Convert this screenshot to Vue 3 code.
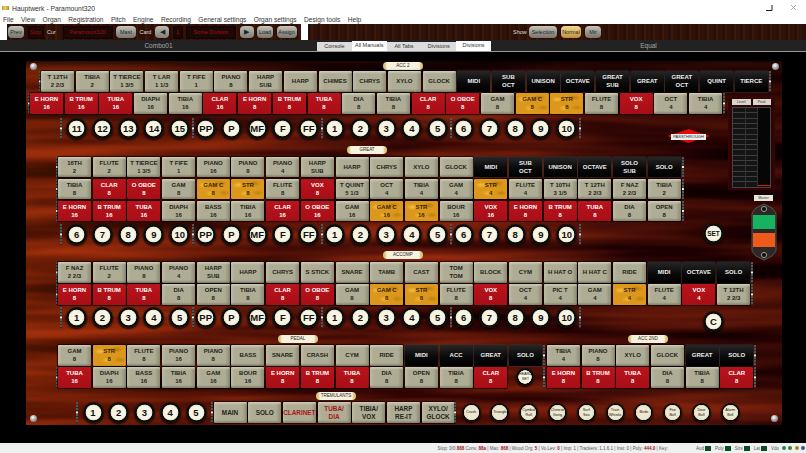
<script setup>
const parse = (list) =>
  list.split(',').map((s) => {
    const [kind, ...lines] = s.trim().split('|')
    return { kind, lines }
  })

const a1 = parse('b|T 12TH|2 2/3,b|TIBIA|2,b|T TIERCE|1 3/5,b|T LAR|1 1/3,b|T FIFE|1,b|PIANO|8,b|HARP|SUB,b|HARP,b|CHIMES,b|CHRYS,b|XYLO,b|GLOCK,d|MIDI,d|SUB|OCT,d|UNISON,d|OCTAVE,d|GREAT|SUB,d|GREAT,d|GREAT|OCT,d|QUINT,d|TIERCE')
const a2 = parse('r|E HORN|16,r|B TRUM|16,r|TUBA|16,b|DIAPH|16,b|TIBIA|16,r|CLAR|16,r|E HORN|8,r|B TRUM|8,r|TUBA|8,b|DIA|8,b|TIBIA|8,r|CLAR|8,r|O OBOE|8,b|GAM|8,g|GAM C|8,g|STR|8,b|FLUTE|8,r|VOX|8,b|OCT|4,b|TIBIA|4')
const g1 = parse('b|16TH|2,b|FLUTE|2,b|T TIERCE|1 3/5,b|T FIFE|1,b|PIANO|16,b|PIANO|8,b|PIANO|4,b|HARP|SUB,b|HARP,b|CHRYS,b|XYLO,b|GLOCK,d|MIDI,d|SUB|OCT,d|UNISON,d|OCTAVE,d|SOLO|SUB,d|SOLO')
const g2 = parse('b|TIBIA|8,r|CLAR|8,r|O OBOE|8,b|GAM|8,g|GAM C|8,g|STR|8,b|FLUTE|8,r|VOX|8,b|T QUINT|5 1/3,b|OCT|4,b|TIBIA|4,b|GAM|4,g|STR|4,b|FLUTE|4,b|T 10TH|3 1/5,b|T 12TH|2 2/3,b|F NAZ|2 2/3,b|TIBIA|2')
const g3 = parse('r|E HORN|16,r|B TRUM|16,r|TUBA|16,b|DIAPH|16,b|BASS|16,b|TIBIA|16,r|CLAR|16,r|O OBOE|16,b|GAM|16,g|GAM C|16,g|STR|16,b|BOUR|16,r|VOX|16,r|E HORN|8,r|B TRUM|8,r|TUBA|8,b|DIA|8,b|OPEN|8')
const c1 = parse('b|F NAZ|2 2/3,b|FLUTE|2,b|PIANO|8,b|PIANO|4,b|HARP|SUB,b|HARP,b|CHRYS,b|S STICK,b|SNARE,b|TAMB,b|CAST,b|TOM|TOM,b|BLOCK,b|CYM,b|H HAT O,b|H HAT C,b|RIDE,d|MIDI,d|OCTAVE,d|SOLO')
const c2 = parse('r|E HORN|8,r|B TRUM|8,r|TUBA|8,b|DIA|8,b|OPEN|8,b|TIBIA|8,r|CLAR|8,r|O OBOE|8,b|GAM|8,g|GAM C|8,g|STR|8,b|FLUTE|8,r|VOX|8,b|OCT|4,b|PIC T|4,b|GAM|4,g|STR|4,b|FLUTE|4,r|VOX|4,b|T 12TH|2 2/3')
const p1 = parse('b|GAM|8,g|STR|8,b|FLUTE|8,b|PIANO|16,b|PIANO|8,b|BASS,b|SNARE,b|CRASH,b|CYM,b|RIDE,d|MIDI,d|ACC,d|GREAT,d|SOLO')
const p2 = parse('r|TUBA|16,b|DIAPH|16,b|BASS|16,b|TIBIA|16,b|GAM|16,b|BOUR|16,r|E HORN|8,r|B TRUM|8,r|TUBA|8,b|DIA|8,b|OPEN|8,b|TIBIA|8,r|CLAR|8')
const s1 = parse('b|TIBIA|4,b|PIANO|8,b|XYLO,b|GLOCK,d|GREAT,d|SOLO')
const s2 = parse('r|E HORN|8,r|B TRUM|8,r|TUBA|8,b|DIA|8,b|TIBIA|8,r|CLAR|8')
const trem = parse('b|MAIN,b|SOLO,t|CLARINET,t|TUBA/|DIA,b|TIBIA/|VOX,b|HARP|RE-IT,b|XYLO/|GLOCK')

const pistons = (a) => a.split(' ')
const n1 = pistons('11 12 13 14 15')
const n2 = pistons('6 7 8 9 10')
const n3 = pistons('1 2 3 4 5')
const dyn = pistons('PP P MF F FF')

const fx = [['Crash'], ['Triangle'], ['Cymbal', 'Roll'], ['Chinese', 'Gong'], ['Surf', 'Sea'], ['Train', 'Whistle'], ['Birds'], ['Fire', 'Bell'], ['Door', 'Bell'], ['Alarm', 'Bell']]
const menu = ['File', 'View', 'Organ', 'Registration', 'Pitch', 'Engine', 'Recording', 'General settings', 'Organ settings', 'Design tools', 'Help']
const tabs = [['Console', ''], ['All Manuals', 'on'], ['All Tabs', ''], ['Divisions', ''], ['Divisions', 'on']]
const groups = [[n1, 'first'], [dyn, ''], [n3, ''], [n2, '']]
const groups2 = [[n2, 'first'], [dyn, ''], [n3, ''], [n2, '']]
const groups3 = [[n3, 'first'], [dyn, ''], [n3, ''], [n2, '']]
const rowsOfPistons = [groups, groups2, groups3]
</script>

<template>
  <div class="app">
    <header class="title">
      <span class="logo"></span>
      <span class="title-text">Hauptwerk - Paramount320</span>
      <svg class="winbtns" width="36" height="10" viewBox="0 0 36 10">
        <path d="M2 7.5H8V2" fill="none" stroke="#222" stroke-width="1" />
        <path d="M27 2l5 5M32 2l-5 5" stroke="#aaa" stroke-width="1" />
      </svg>
    </header>
    <nav class="menu">
      <span v-for="m in menu" :key="m">{{ m }}</span>
    </nav>

    <div class="toolbar">
      <div class="tool-left">
        <span class="silver w16">Prev</span>
        <span class="lcd w16">Stop</span>
        <span class="tlabel w12">Cur</span>
        <span class="lcd w50">Paramount320</span>
        <span class="silver w20">Mast</span>
        <span class="tlabel w12">Card</span>
        <span class="silver arrow">&#9664;</span>
        <span class="lcd w10">1</span>
        <span class="lcd w50">Some Division</span>
        <span class="silver arrow">&#9654;</span>
        <span class="silver w16">Load</span>
        <span class="silver w20">Assign</span>
      </div>
      <div class="tool-right">
        <span class="tlabel w12">Show</span>
        <span class="silver w28">Selection</span>
        <span class="gold w20">Normal</span>
        <span class="silver w16">Mir</span>
      </div>
    </div>

    <div class="tabbar">
      <span class="zone">Combo01</span>
      <div class="tabs">
        <span v-for="(t, i) in tabs" :key="i" class="tab" :class="t[1]">{{ t[0] }}</span>
      </div>
      <span class="zone">Equal</span>
    </div>

    <main class="stage">
      <section class="panel">
        <svg class="wood" width="756" height="364">
          <defs>
            <filter id="grain" x="0" y="0" width="100%" height="100%" color-interpolation-filters="sRGB">
              <feTurbulence type="fractalNoise" baseFrequency="0.0035 0.05" numOctaves="3" seed="11" />
              <feColorMatrix values="0.95 0 0 0 -0.14  0.34 0 0 0 -0.1  0.1 0 0 0 -0.02  0 0 0 0 1" />
            </filter>
            <linearGradient id="shade" x1="0" x2="1" y1="0" y2="0">
              <stop offset="0" stop-color="#c84400" stop-opacity=".28" />
              <stop offset=".4" stop-color="#8a2000" stop-opacity=".08" />
              <stop offset=".7" stop-color="#200000" stop-opacity=".18" />
              <stop offset="1" stop-color="#180000" stop-opacity=".42" />
            </linearGradient>
            <linearGradient id="topfade" x1="0" x2="0" y1="0" y2="1">
              <stop offset="0" stop-color="#000" stop-opacity=".7" />
              <stop offset=".03" stop-color="#000" stop-opacity=".1" />
              <stop offset="1" stop-color="#000" stop-opacity="0" />
            </linearGradient>
          </defs>
          <rect width="756" height="364" filter="url(#grain)" />
          <rect width="756" height="364" fill="url(#shade)" />
          <rect width="756" height="364" fill="url(#topfade)" />
        </svg>

        <div class="content">
          <div class="pills pills-a"><span class="pill">ACC 2</span></div>
          <div class="row in-a1">
            <i class="strip"></i>
            <button v-for="(b, i) in a1" :key="i" class="key" :class="b.kind"><span v-for="l in b.lines" :key="l">{{ l }}</span></button>
            <i class="strip end"></i>
          </div>
          <div class="row in-a2 mt15">
            <i class="strip"></i>
            <button v-for="(b, i) in a2" :key="i" class="key" :class="b.kind"><span v-for="l in b.lines" :key="l">{{ l }}</span></button>
            <i class="strip end"></i>
          </div>

          <div class="pistons m-a">
            <template v-for="(g, gi) in rowsOfPistons[0]" :key="gi">
              <i class="strip tall"></i>
              <div class="pgroup" :class="g[1]"><span v-for="n in g[0]" :key="n" class="piston">{{ n }}</span></div>
            </template>
            <i class="strip tall"></i>
          </div>

          <div class="pills pills-g"><span class="pill">GREAT</span></div>
          <div class="row in-g">
            <i class="strip"></i>
            <button v-for="(b, i) in g1" :key="i" class="key" :class="b.kind"><span v-for="l in b.lines" :key="l">{{ l }}</span></button>
            <i class="strip end"></i>
          </div>
          <div class="row in-g mt15">
            <i class="strip"></i>
            <button v-for="(b, i) in g2" :key="i" class="key" :class="b.kind"><span v-for="l in b.lines" :key="l">{{ l }}</span></button>
            <i class="strip end"></i>
          </div>
          <div class="row in-g mt15">
            <i class="strip"></i>
            <button v-for="(b, i) in g3" :key="i" class="key" :class="b.kind"><span v-for="l in b.lines" :key="l">{{ l }}</span></button>
            <i class="strip end"></i>
          </div>

          <div class="pistons m-g">
            <template v-for="(g, gi) in rowsOfPistons[1]" :key="gi">
              <i class="strip tall"></i>
              <div class="pgroup" :class="g[1]"><span v-for="n in g[0]" :key="n" class="piston">{{ n }}</span></div>
            </template>
            <i class="strip tall"></i>
          </div>

          <div class="pills pills-c"><span class="pill">ACCOMP</span></div>
          <div class="row in-g">
            <i class="strip"></i>
            <button v-for="(b, i) in c1" :key="i" class="key" :class="b.kind"><span v-for="l in b.lines" :key="l">{{ l }}</span></button>
            <i class="strip end"></i>
          </div>
          <div class="row in-g mt15">
            <i class="strip"></i>
            <button v-for="(b, i) in c2" :key="i" class="key" :class="b.kind"><span v-for="l in b.lines" :key="l">{{ l }}</span></button>
            <i class="strip end"></i>
          </div>

          <div class="pistons m-c">
            <template v-for="(g, gi) in rowsOfPistons[2]" :key="gi">
              <i class="strip tall"></i>
              <div class="pgroup" :class="g[1]"><span v-for="n in g[0]" :key="n" class="piston">{{ n }}</span></div>
            </template>
            <i class="strip tall"></i>
          </div>

          <div class="pills pills-p"><span class="pill">PEDAL</span><span class="pill second">ACC 2ND</span></div>
          <div class="row in-g">
            <i class="strip blank"></i>
            <button v-for="(b, i) in p1" :key="i" class="key" :class="b.kind"><span v-for="l in b.lines" :key="l">{{ l }}</span></button>
            <i class="strip mid"></i>
            <button v-for="(b, i) in s1" :key="i" class="key" :class="b.kind"><span v-for="l in b.lines" :key="l">{{ l }}</span></button>
            <i class="strip end"></i>
          </div>
          <div class="row in-g mt15">
            <i class="strip"></i>
            <button v-for="(b, i) in p2" :key="i" class="key" :class="b.kind"><span v-for="l in b.lines" :key="l">{{ l }}</span></button>
            <div class="slot"><span class="piston mini"><em>HEARD</em><em>SET</em></span></div>
            <i class="strip mid"></i>
            <button v-for="(b, i) in s2" :key="i" class="key" :class="b.kind"><span v-for="l in b.lines" :key="l">{{ l }}</span></button>
            <i class="strip end"></i>
          </div>

          <div class="pills pills-t"><span class="pill">TREMULANTS</span></div>
          <div class="trem">
            <i class="strip tall"></i>
            <div class="pgroup tremgroup"><span v-for="n in n3" :key="n" class="piston">{{ n }}</span></div>
            <i class="strip tall"></i>
            <div class="row tremkeys">
              <button v-for="(b, i) in trem" :key="i" class="key" :class="b.kind"><span v-for="l in b.lines" :key="l">{{ l }}</span></button>
            </div>
            <i class="strip tall"></i>
            <div class="fxgroup">
              <span v-for="(f, i) in fx" :key="i" class="piston fx"><em v-for="l in f" :key="l">{{ l }}</em></span>
            </div>
          </div>
        </div>

        <span class="bolt tl"></span><span class="bolt tr"></span><span class="bolt bl"></span><span class="bolt br"></span>

        <div class="alert"><span>PASSTHROUGH</span></div>

        <div class="meter">
          <div class="chips"><span>Level</span><span>Peak</span></div>
          <div class="bars"><i></i><i></i><i class="peak"></i></div>
        </div>

        <span class="piston free set">SET</span>
        <span class="piston free cancel">C</span>

        <div class="expr-label">Master</div>
        <svg class="expr" width="26" height="58" viewBox="0 0 26 58">
          <path d="M5 5 L13 1 L21 5 L25 10 V48 L21 53 L13 57 L5 53 L1 48 V10 Z" fill="#2c2826" stroke="#555" />
          <circle cx="13" cy="6" r="2.6" fill="#111" stroke="#999" stroke-width="1" />
          <circle cx="13" cy="52" r="2.6" fill="#111" stroke="#999" stroke-width="1" />
          <rect x="2" y="12" width="22" height="14" fill="#17b25f" />
          <rect x="2" y="30" width="22" height="14" fill="#ee5a1a" />
        </svg>
      </section>
    </main>

    <footer class="status">
      <span class="st">Stop: 0/0 <b>888</b> Cons: <b>88a</b> | Max: <b>868</b> | Wood Org: <b>5</b> | Vo.Lev: <b>0</b> | Imp: 1 | Trackers: 1.1.6.1 | Inst: 0 | Poly: <b>444.0</b> | Key:</span>
      <span class="leds">
        Aud <i class="sq"></i> Poly <i class="sq"></i> Strs <i class="sq"></i> Lat <i class="sq"></i> Vdo
        <i class="dot g"></i><i class="dot g"></i><i class="dot y"></i><i class="dot b"></i>
      </span>
    </footer>
  </div>
</template>

<style scoped>
.app {
  width: 806px;
  height: 453px;
  display: flex;
  flex-direction: column;
  overflow: hidden;
  background: #fff;
  font-family: "Liberation Sans", Arial, sans-serif;
}
.title {
  height: 16px;
  display: flex;
  align-items: center;
  padding-left: 2px;
  gap: 3px;
  font: 6.8px "Liberation Sans", Arial, sans-serif;
  color: #333;
}
.logo {
  width: 7px;
  height: 4px;
  background: linear-gradient(90deg, #c8a030, #e8d070, #b08820);
}
.winbtns { margin-left: auto; margin-right: 6px; }
.menu {
  height: 8px;
  display: flex;
  align-items: center;
  gap: 7.4px;
  padding-left: 3px;
  font: 6.6px/8px "Liberation Sans", Arial, sans-serif;
  color: #333;
  white-space: nowrap;
}
.toolbar {
  height: 16px;
  display: flex;
  padding-left: 7px;
  gap: 7px;
}
.tool-left, .tool-right {
  display: flex;
  align-items: center;
  background:
    repeating-linear-gradient(90deg, rgba(0,0,0,.25) 0 3px, rgba(120,40,10,.12) 3px 5px, rgba(0,0,0,.1) 5px 9px),
    #36140a;
}
.tool-left {
  width: 293px;
  gap: 3.5px;
  padding-left: 1px;
}
.tool-right {
  flex: 1;
  gap: 4px;
  padding-left: 205px;
}
.silver, .gold {
  height: 12px;
  border-radius: 4px;
  font-size: 5.5px;
  line-height: 12px;
  text-align: center;
  color: #222;
  box-shadow: 0 0 1px #000;
  flex: none;
}
.silver { background: linear-gradient(#c6c6bc, #96958c 55%, #77766e); }
.gold { background: linear-gradient(#f0da8c, #d8b060 60%, #b98c3c); }
.arrow { width: 14px; font-size: 7px; background: linear-gradient(#bcbcb2, #807f78); }
.lcd {
  height: 13px;
  flex: none;
  background: #1c0806;
  color: #a01010;
  font-size: 5.5px;
  line-height: 13px;
  text-align: center;
  white-space: nowrap;
  overflow: hidden;
  box-shadow: inset 0 0 2px #000;
}
.tlabel { color: #ddd; font-size: 5.5px; flex: none; }
.w10 { width: 10px; }
.w12 { width: 12px; }
.w16 { width: 16px; }
.w20 { width: 20px; }
.w28 { width: 28px; }
.w50 { width: 50px; }

.tabbar {
  height: 12px;
  display: grid;
  grid-template-columns: 317px 174px 1fr;
  background: #222;
  border-bottom: 1px solid #999;
  box-sizing: border-box;
  color: #a8a8a8;
  font-size: 6.5px;
}
.zone { text-align: center; line-height: 11px; }
.tabs { display: flex; align-items: flex-end; height: 11px; }
.tab {
  flex: 1;
  height: 9px;
  background: #dcdcdc;
  color: #333;
  font-size: 5.5px;
  line-height: 9px;
  text-align: center;
  white-space: nowrap;
}
.tab.on { background: #fff; height: 10px; }

.stage {
  flex: 1;
  background: #000;
  padding: 9px 0 0 26px;
}
.panel {
  position: relative;
  width: 756px;
  height: 364px;
  overflow: hidden;
  background: #3a0a06;
}
.wood { position: absolute; left: 0; top: 0; }
.content {
  position: relative;
  display: flex;
  flex-direction: column;
}
.pills {
  display: flex;
  height: 8px;
}
.pill {
  width: 40px;
  height: 8px;
  background: linear-gradient(90deg, #d8c878 0 2px, #f6f2de 4px, #f6f2de calc(100% - 4px), #d8c878 calc(100% - 2px));
  border-radius: 4px;
  color: #222;
  font-size: 4.5px;
  line-height: 8px;
  text-align: center;
  flex: none;
}
.pill.second { margin-left: 310px; }
.pills-a { margin-top: 1px; margin-bottom: 1px; padding-left: 357px; }
.pills-g { margin-top: 7.5px; margin-bottom: 2.5px; padding-left: 321px; }
.pills-c { margin-top: 6.5px; margin-bottom: 3px; padding-left: 357px; }
.pills-p { margin-top: 7.5px; margin-bottom: 2px; padding-left: 252px; }
.pills-t { margin-top: 4.5px; margin-bottom: 2px; padding-left: 290px; }

.row {
  display: flex;
  gap: 1.7px;
  height: 20.5px;
}
.mt15 { margin-top: 1.5px; }
.in-a1 { margin-left: 12.5px; }
.in-a2 { margin-left: 1.5px; }
.in-g { margin-left: 29.5px; }

.strip {
  width: 2px;
  flex: none;
  margin-right: -1.2px;
  background:
    radial-gradient(circle at 50% 50%, #eee 0 1px, transparent 1.2px),
    repeating-linear-gradient(#555 0 2px, #2a2a2a 2px 3px);
}
.strip.end { margin-right: 0; margin-left: -0.5px; }
.strip.mid { margin-left: -0.5px; margin-right: 0; }
.strip.blank { background: none; }
.strip.tall { height: 21px; margin: 0; }

.key {
  width: 33px;
  flex: none;
  height: 100%;
  padding: 0;
  border: 0;
  border-radius: 1px;
  display: flex;
  flex-direction: column;
  align-items: center;
  justify-content: center;
  font: bold 6px/8px "Liberation Sans", Arial, sans-serif;
  white-space: nowrap;
  box-shadow: 0 0 1px 1px rgba(0,0,0,.7);
}
.key.b, .key.t {
  color: #232319;
  background:
    linear-gradient(#d0cebb, rgba(208,206,187,0) 3px),
    linear-gradient(0deg, #80806a, rgba(128,128,106,0) 3px),
    linear-gradient(90deg, #bcbaa4, #aeac94 4px, #aeac94 28px, #8c8a72);
}
.key.t { color: #a81818; }
.key.r {
  color: #fff;
  background: linear-gradient(#b9141c, #a80e16);
}
.key.g {
  color: #3a2400;
  background:
    radial-gradient(ellipse 6px 3px at 22% 30%, #f2c040, transparent),
    radial-gradient(ellipse 7px 3px at 70% 22%, #b87810, transparent),
    radial-gradient(ellipse 5px 3px at 42% 72%, #f0b830, transparent),
    radial-gradient(ellipse 6px 3px at 82% 70%, #c08010, transparent),
    #dc981c;
}
.key.d {
  color: #eee;
  background: linear-gradient(#262626, #0a0a0a 55%, #000);
  box-shadow: 0 0 1px 1px rgba(50,50,50,.5);
}

.pistons {
  display: flex;
  align-items: center;
  height: 21px;
  margin-left: 33.7px;
}
.m-a { margin-top: 4px; }
.m-g { margin-top: 2.5px; }
.m-c { margin-top: 2px; }
.pgroup {
  display: flex;
  gap: 4.75px;
  margin: 0 1.5px;
}
.pgroup.first { margin-left: 4.5px; }
.tremgroup { margin: 0 4.5px; }
.piston {
  width: 21px;
  height: 21px;
  flex: none;
  border-radius: 50%;
  display: flex;
  flex-direction: column;
  align-items: center;
  justify-content: center;
  color: #111;
  font-weight: bold;
  font-size: 9.5px;
  background: radial-gradient(circle closest-side, #f7f4e4 0 62%, #e4dfc4 72%, #060606 78%, #141414 100%);
  box-shadow: 0 1px 2px #000;
}
.piston em { font-style: normal; font-weight: normal; line-height: 5px; font-size: 3.8px; }
.slot { width: 33px; flex: none; display: flex; align-items: center; justify-content: center; }
.piston.mini { width: 18px; height: 18px; }
.trem {
  display: flex;
  align-items: center;
  height: 21px;
  margin-left: 50px;
}
.tremkeys { height: 21px; margin-left: .5px; margin-right: -.5px; }
.tremkeys .key { font-size: 6.4px; }
.fxgroup {
  display: flex;
  gap: 9.8px;
  margin-left: 5.5px;
}
.piston.fx {
  width: 19px;
  height: 19px;
  background: radial-gradient(circle closest-side, #efe8d0 0 66%, #d8d0b6 78%, #060606 84%, #141414 100%);
}

.bolt {
  position: absolute;
  width: 7px;
  height: 7px;
  border-radius: 50%;
  background: radial-gradient(circle at 40% 35%, #fff, #aaa 45%, #555);
}
.tl { left: 4px; top: 2px; }
.tr { left: 746px; top: 2px; }
.bl { left: 4px; top: 354px; }
.br { left: 745px; top: 354px; }

.alert {
  position: absolute;
  left: 645px;
  top: 71px;
  width: 35px;
  height: 8px;
  color: #222;
  font-size: 4px;
  line-height: 8px;
  text-align: center;
}
.alert::before {
  content: "";
  position: absolute;
  left: -4px;
  top: -3px;
  width: 43px;
  height: 14px;
  background: #e00808;
  clip-path: polygon(0 50%, 30% 22%, 50% 0, 70% 22%, 100% 50%, 70% 78%, 50% 100%, 30% 78%);
}
.alert span {
  position: relative;
  display: block;
  height: 6px;
  margin-top: 1px;
  line-height: 6px;
  background: #eeeeee;
  top: 1px;
}

.meter {
  position: absolute;
  left: 702px;
  top: 36px;
  width: 47px;
  height: 93px;
  background: #2e0505;
  box-shadow: inset 0 0 1px #900;
  box-sizing: border-box;
  padding: 2px 4px;
  display: flex;
  flex-direction: column;
  gap: 2px;
}
.chips {
  display: flex;
  gap: 2px;
  height: 6px;
}
.chips span {
  flex: 1;
  background: #d8d6cc;
  color: #333;
  font-size: 3.5px;
  line-height: 6px;
  text-align: center;
}
.bars {
  flex: 1;
  display: flex;
  border: 1px solid #444;
  background: #111;
}
.bars i {
  flex: 1;
  border-right: 1px solid #333;
  background: repeating-linear-gradient(#141414 0 4.3px, #3e3e3e 4.3px 5.3px);
}
.bars i.peak {
  background: linear-gradient(0deg, #111 0 1px, #d01818 1px 2px, #060606 2px);
  border-right: 0;
}

.piston.free { position: absolute; }
.set { left: 677px; top: 162px; font-size: 6.5px; }
.cancel { left: 677px; top: 250px; }

.expr-label {
  position: absolute;
  left: 728px;
  top: 134px;
  width: 19px;
  height: 6px;
  background: #e8e6da;
  color: #333;
  font-size: 3.5px;
  line-height: 6px;
  text-align: center;
}
.expr { position: absolute; left: 725px; top: 142px; }

.status {
  height: 10px;
  background: #f0f0f0;
  display: flex;
  align-items: center;
  justify-content: flex-end;
  gap: 28px;
  padding-right: 1px;
  font-size: 4.5px;
  color: #555;
  white-space: nowrap;
}
.status b { color: #a01010; }
.leds { display: flex; align-items: center; gap: 1.5px; }
.sq { width: 6px; height: 5px; background: #0c4a20; margin-right: 2px; }
.dot { width: 4px; height: 4px; border-radius: 50%; margin-left: 1px; }
.dot.g { background: #2a8a3a; }
.dot.y { background: #9a8a20; }
.dot.b { background: #2a5a9a; }
</style>

<style>
html, body { margin: 0; background: #000; overflow: hidden; }
</style>
